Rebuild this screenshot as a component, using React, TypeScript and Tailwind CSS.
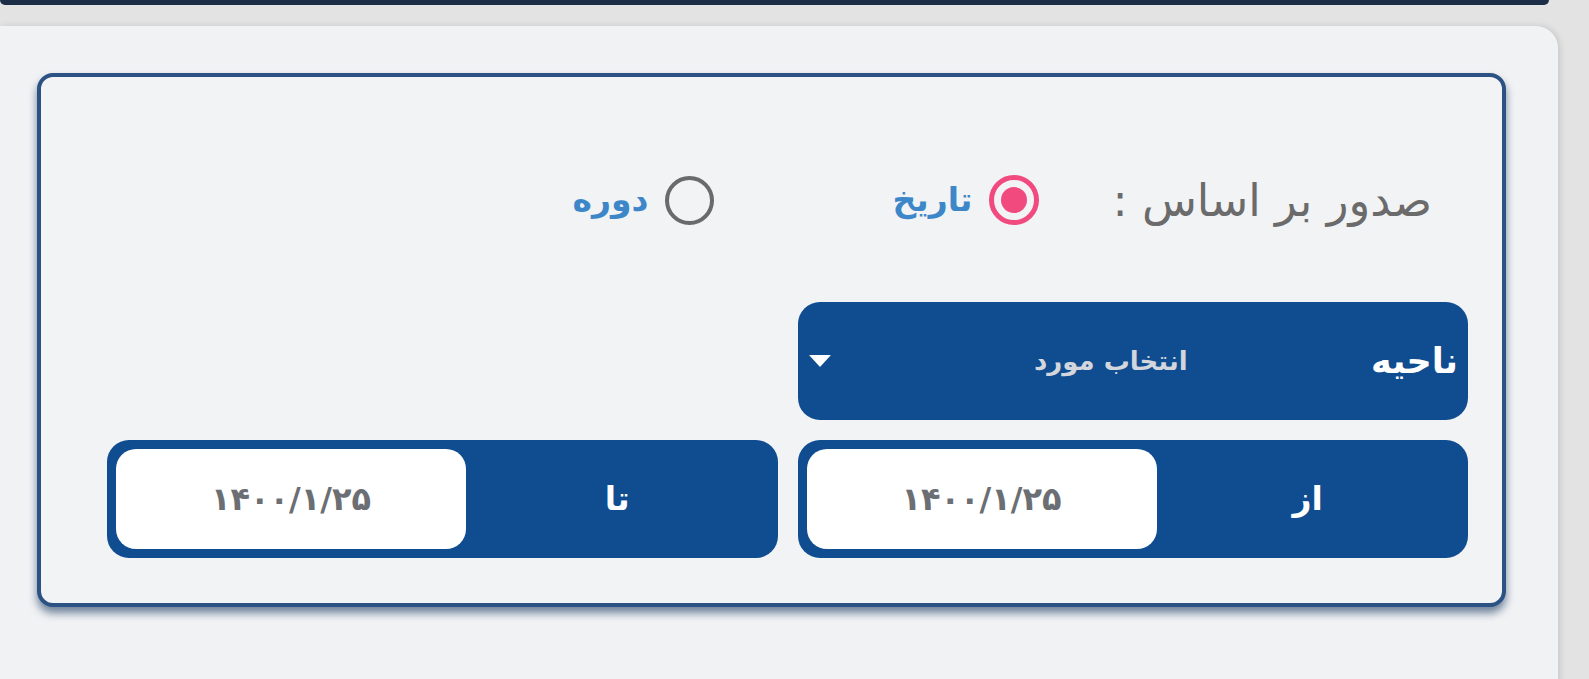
import React from "react";

const font = { fontFamily: '"DejaVu Sans", "Noto Sans", sans-serif' };

function Radio({ checked, label }: { checked?: boolean; label: string }) {
  return (
    <label className="flex items-center gap-[17px] cursor-pointer">
      {checked ? (
        <span className="flex h-[50px] w-[50px] items-center justify-center rounded-full border-[5px] border-[#f04a7e]">
          <span className="h-[26px] w-[26px] rounded-full bg-[#f04a7e]" />
        </span>
      ) : (
        <span className="h-[49px] w-[49px] rounded-full border-[4px] border-[#6a6a6a]" />
      )}
      <span className="text-[33px] font-bold text-[#3d87c9]">{label}</span>
    </label>
  );
}

function DateField({ label, value }: { label: string; value: string }) {
  return (
    <div className="flex h-[118px] items-stretch rounded-[22px] bg-[#0f4c90] p-[9px]">
      <div className="flex flex-1 items-center justify-center text-[33px] font-bold text-white">
        {label}
      </div>
      <div className="flex w-[350px] items-center justify-center rounded-[20px] bg-white text-[32px] font-bold text-[#6b6e73]">
        {value}
      </div>
    </div>
  );
}

export default function App() {
  return (
    <div className="h-[679px] w-full overflow-hidden bg-[#e3e3e3]" style={font}>
      {/* previous card edge */}
      <div className="mr-[40px] h-[5px] rounded-b-[14px] bg-[#1c2d48]" />

      {/* main card */}
      <div className="mr-[31px] mt-[21px] h-[660px] rounded-tr-[22px] bg-[#f1f2f4] pt-[47px] shadow-[2px_0_6px_rgba(0,0,0,0.12)]">
        <div
          dir="rtl"
          className="ml-[37px] mr-[52px] h-[534px] rounded-[16px] border-4 border-[#2b5283] bg-[#f2f3f5] pt-[93px] shadow-[0_6px_9px_rgba(25,55,95,0.6)]"
        >
          {/* issue basis */}
          <div className="flex h-[60px] items-center pr-[70px]">
            <span className="ml-[73px] text-[45px] leading-none text-[#6b6b6b]">صدور بر اساس :</span>
            <Radio checked label="تاریخ" />
            <div className="w-[178px]" />
            <Radio label="دوره" />
          </div>

          {/* fields */}
          <div className="mt-[72px] grid grid-cols-2 gap-[20px] pl-[66px] pr-[34px]">
            <div className="flex h-[118px] items-center rounded-[22px] bg-[#0f4c90]">
              <span className="pr-[10px] text-[35px] font-bold text-white">ناحیه</span>
              <span className="flex-1 text-center text-[26px] font-bold text-[#d3d6dc]">انتخاب مورد</span>
              <svg width="22" height="12" viewBox="0 0 22 12" className="ml-[11px] mr-[20px]">
                <path d="M0 0 L22 0 L11 12 Z" fill="#ffffff" />
              </svg>
            </div>
            <div />
            <DateField label="از" value="۱۴۰۰/۱/۲۵" />
            <DateField label="تا" value="۱۴۰۰/۱/۲۵" />
          </div>
        </div>
      </div>
    </div>
  );
}
